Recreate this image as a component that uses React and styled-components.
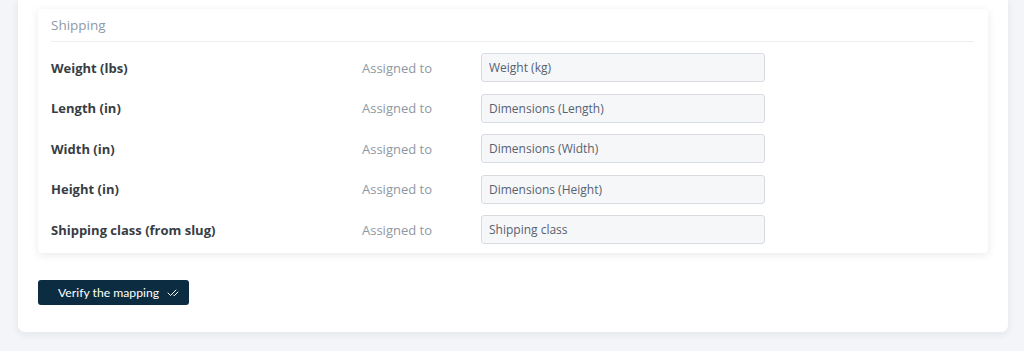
import React from "react";
import styled, { createGlobalStyle } from "styled-components";
import { CheckCheck } from "lucide-react";

const GlobalStyle = createGlobalStyle`
  html, body {
    margin: 0;
    padding: 0;
    background: #f3f5f8;
    font-family: "Open Sans", "Noto Sans", "Liberation Sans", sans-serif;
  }
`;

const Page = styled.div`
  padding: 0 16px 20px 18px;
`;

const OuterCard = styled.div`
  background: #ffffff;
  border-radius: 0 0 7px 7px;
  box-shadow: 0 2px 8px rgba(30, 45, 70, 0.08);
  padding: 9px 20px 27px 20px;
`;

const InnerCard = styled.section`
  background: #ffffff;
  border-radius: 4px;
  box-shadow: 0 2px 8px rgba(30, 45, 70, 0.1);
  padding: 0 14px 9px 13px;
`;

const Header = styled.h3`
  margin: 0;
  height: 32px;
  display: flex;
  align-items: center;
  font-size: 13.5px;
  font-weight: 400;
  color: #8d9aa8;
  border-bottom: 1px solid #eceef1;
`;

const Rows = styled.div`
  display: flex;
  flex-direction: column;
  gap: 11.5px;
  padding-top: 11px;
`;

const Row = styled.div`
  display: grid;
  grid-template-columns: 311px 119px 284px;
  align-items: center;
`;

const FieldLabel = styled.span`
  font-size: 13px;
  font-weight: 700;
  color: #383d44;
`;

const Assigned = styled.span`
  font-size: 13px;
  color: #8e98a3;
`;

const Field = styled.div`
  height: 29px;
  box-sizing: border-box;
  border: 1px solid #d8dce1;
  border-radius: 3px;
  background: #f6f7f9;
  display: flex;
  align-items: center;
  padding-left: 7px;
  font-size: 12px;
  color: #566270;
`;

const Button = styled.button`
  margin-top: 27px;
  height: 25px;
  width: 151px;
  box-sizing: border-box;
  display: flex;
  align-items: center;
  gap: 8px;
  padding: 0 0 0 20px;
  border: none;
  border-radius: 3px;
  background: #0b2c41;
  color: #ffffff;
  font-family: Lato, "Open Sans", sans-serif;
  font-size: 12.2px;
  white-space: nowrap;
  cursor: pointer;

  svg {
    flex-shrink: 0;
  }
`;

const rows = [
  ["Weight (lbs)", "Weight (kg)"],
  ["Length (in)", "Dimensions (Length)"],
  ["Width (in)", "Dimensions (Width)"],
  ["Height (in)", "Dimensions (Height)"],
  ["Shipping class (from slug)", "Shipping class"],
];

export default function App() {
  return (
    <>
      <GlobalStyle />
      <Page>
        <OuterCard>
          <InnerCard>
            <Header>Shipping</Header>
            <Rows>
              {rows.map(([label, value]) => (
                <Row key={label}>
                  <FieldLabel>{label}</FieldLabel>
                  <Assigned>Assigned to</Assigned>
                  <Field>{value}</Field>
                </Row>
              ))}
            </Rows>
          </InnerCard>
          <Button>
            Verify the mapping
            <CheckCheck size={12} strokeWidth={2} />
          </Button>
        </OuterCard>
      </Page>
    </>
  );
}
